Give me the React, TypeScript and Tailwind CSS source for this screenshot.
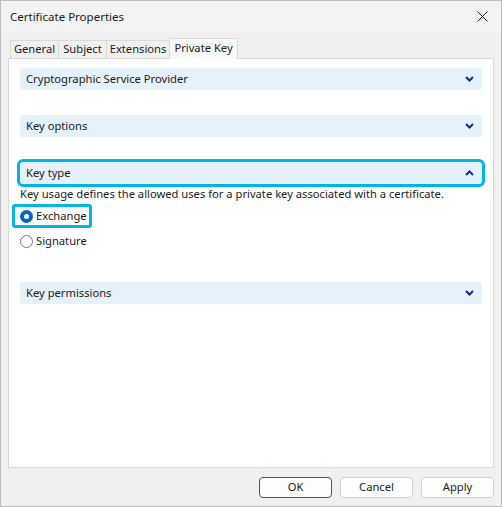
import React from 'react';

const font = { fontFamily: '"Noto Sans", "Open Sans", sans-serif' };

function Chevron({ up = false }: { up?: boolean }) {
  return (
    <svg width="9" height="6" viewBox="0 0 9 6" className="text-[#0a2e8a]">
      {up ? (
        <polyline points="1,5 4.5,1.5 8,5" fill="none" stroke="currentColor" strokeWidth="2" />
      ) : (
        <polyline points="1,1 4.5,4.5 8,1" fill="none" stroke="currentColor" strokeWidth="2" />
      )}
    </svg>
  );
}

function Section({ title, open = false, focused = false }: { title: string; open?: boolean; focused?: boolean }) {
  return (
    <div
      className={`flex h-[22px] items-center justify-between rounded-[3px] bg-[#e5f1fb] pl-[6px] pr-[8px] text-[11.2px] text-[#1b1b1b] ${
        focused ? 'outline-[3px] outline-solid outline-[#00b4e6]' : ''
      }`}
    >
      <span>{title}</span>
      <Chevron up={open} />
    </div>
  );
}

function Radio({ label, checked = false, focused = false }: { label: string; checked?: boolean; focused?: boolean }) {
  return (
    <div
      className={`flex h-[24px] w-fit items-center gap-[3px] rounded-[3px] pl-[8px] pr-[5px] text-[11.2px] text-[#1b1b1b] ${
        focused ? 'outline-[3px] outline-solid outline-[#00b4e6] -outline-offset-[3px]' : ''
      }`}
    >
      {checked ? (
        <span className="flex h-[13px] w-[13px] items-center justify-center rounded-full bg-[#0067c0]">
          <span className="h-[5px] w-[5px] rounded-full bg-white" />
        </span>
      ) : (
        <span className="h-[13px] w-[13px] rounded-full border border-[#7a7a7a] bg-white" />
      )}
      <span>{label}</span>
    </div>
  );
}

function Button({ label, primary = false }: { label: string; primary?: boolean }) {
  return (
    <button
      className={`flex h-[21px] w-[73px] items-center justify-center rounded-[4px] border bg-[#fdfdfd] text-[11.2px] text-[#1b1b1b] ${
        primary ? 'border-[#0067c0]' : 'border-[#d0d0d0]'
      }`}
    >
      {label}
    </button>
  );
}

export default function App() {
  const tabs = [
    { t: 'General', w: 'w-[49px]' },
    { t: 'Subject', w: 'w-[49px]' },
    { t: 'Extensions', w: 'w-[64px]' },
  ];
  return (
    <div style={font} className="flex h-[507px] w-[502px] flex-col border border-[#bcbcbc] bg-[#f0f0f0]">
      <div className="flex h-[31px] items-center justify-between bg-[#f3f3f3] pl-[9px] pr-[13px] text-[11.5px] text-[#1b1b1b]">
        <span>Certificate Properties</span>
        <svg width="11" height="11" viewBox="0 0 11 11">
          <path d="M0.5 0.5 L10.5 10.5 M10.5 0.5 L0.5 10.5" stroke="#222" strokeWidth="1" />
        </svg>
      </div>

      <div className="mt-[6px] flex items-end pl-[9px]">
        {tabs.map(({ t, w }) => (
          <div
            key={t}
            className={`-mr-px flex h-[18px] ${w} items-center justify-center border border-b-0 border-[#d9d9d9] bg-[#f0f0f0] text-[11.2px] text-[#1b1b1b]`}
          >
            {t}
          </div>
        ))}
        <div className="relative z-10 -mb-px flex h-[21px] w-[69px] items-center justify-center border border-b-0 border-[#d9d9d9] bg-[#f9f9f9] pb-[2px] text-[11.2px] text-[#1b1b1b]">
          Private Key
        </div>
      </div>

      <div className="mx-[7px] flex h-[410px] flex-col border border-[#d9d9d9] bg-white px-[11px] pt-[9px]">
        <Section title="Cryptographic Service Provider" />
        <div className="h-[25px]" />
        <Section title="Key options" />
        <div className="h-[25px]" />
        <Section title="Key type" open focused />
        <div className="mt-[2px] text-[11.2px] leading-[16px] text-[#1b1b1b]">
          Key usage defines the allowed uses for a private key associated with a certificate.
        </div>
        <div className="-ml-[8px] mt-[2px] flex flex-col gap-[1px]">
          <Radio label="Exchange" checked focused />
          <Radio label="Signature" />
        </div>
        <div className="h-[29px]" />
        <Section title="Key permissions" />
      </div>

      <div className="flex justify-end gap-[8px] pr-[7px] pt-[9px]">
        <Button label="OK" primary />
        <Button label="Cancel" />
        <Button label="Apply" />
      </div>
    </div>
  );
}
